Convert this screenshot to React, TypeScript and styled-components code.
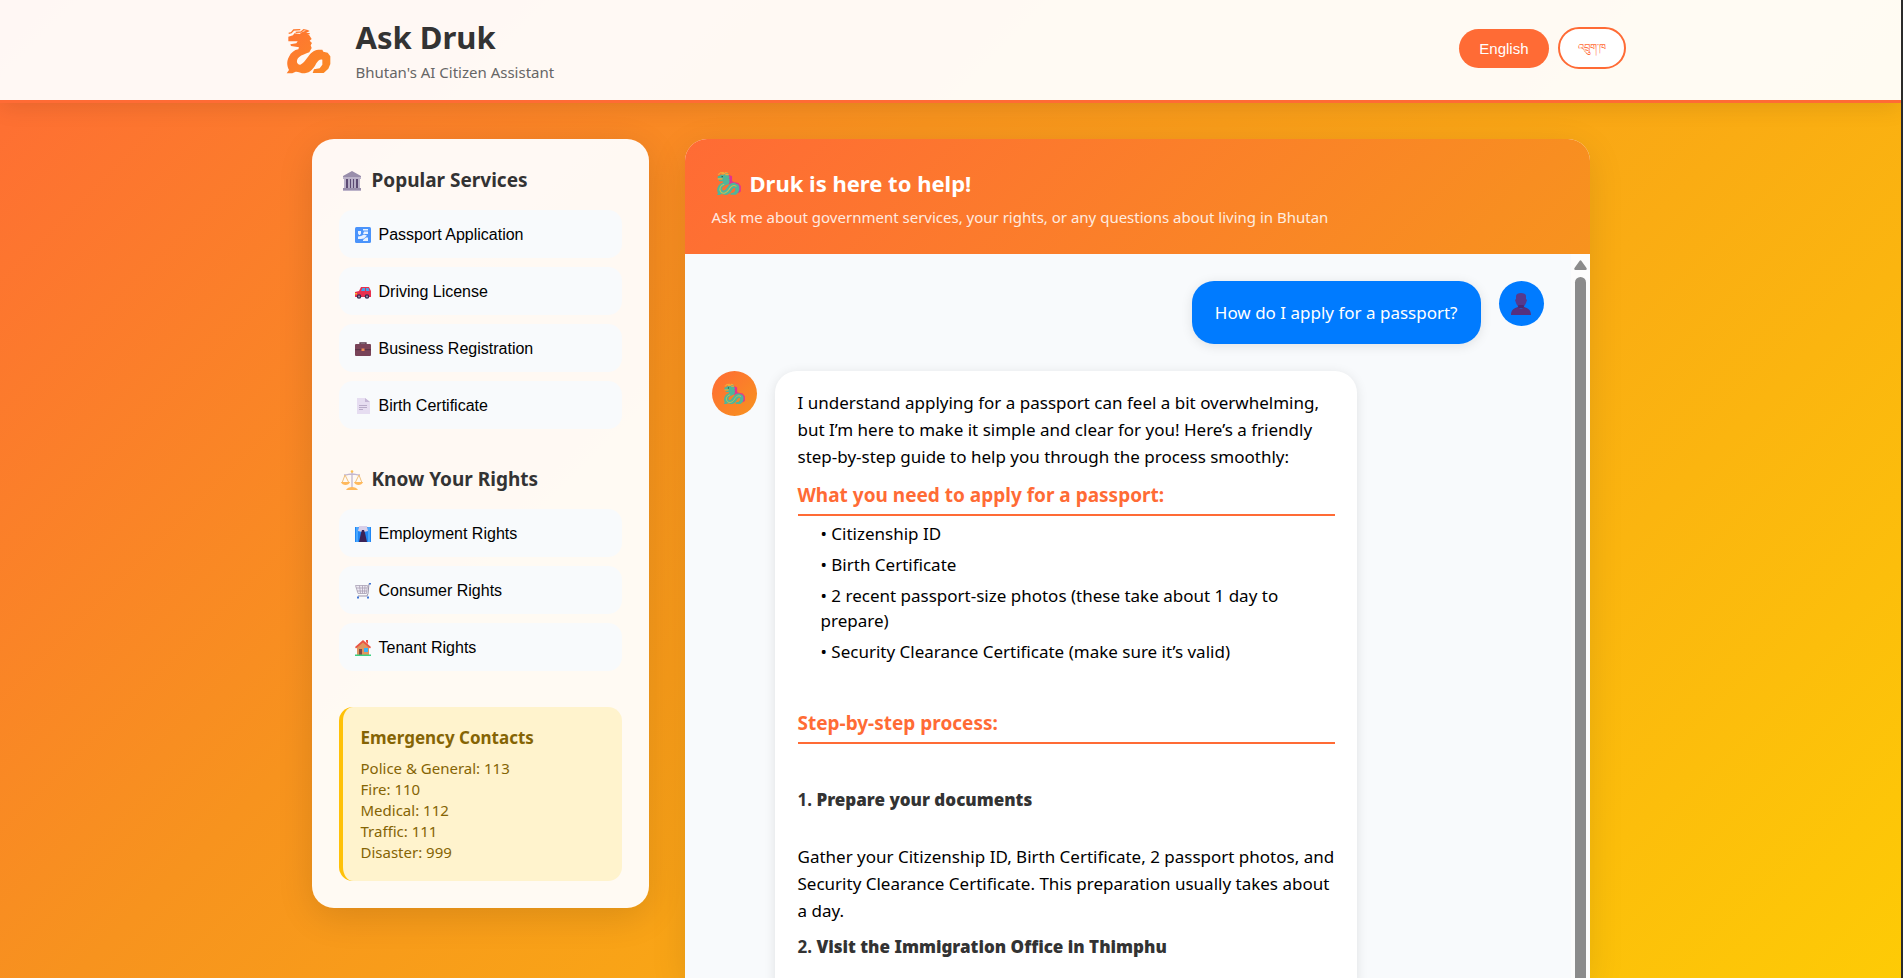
import React from "react";
import styled, { createGlobalStyle } from "styled-components";

const sans = `"Noto Sans", "Open Sans", sans-serif`;
const arial = `"Liberation Sans", Arial, sans-serif`;

const GlobalStyle = createGlobalStyle`
  *, *::before, *::after { box-sizing: border-box; margin: 0; padding: 0; }
  body {
    height: 100vh;
    overflow: hidden;
    font-family: ${sans};
    font-size: 17px;
    color: #000;
  }
`;

const Page = styled.div`
  display: flex;
  flex-direction: column;
  height: 100vh;
  overflow: hidden;
  border-right: 2px solid #2b2b2b;
  background: linear-gradient(135deg, #ff6b35 0%, #f7931e 32%, #ffd700 100%) 0 0 / 100% 1380px;
`;

const Header = styled.header`
  flex: none;
  background: rgba(255, 255, 255, 0.95);
  border-bottom: 3px solid #ff6b35;
  box-shadow: 0 4px 22px rgba(0, 0, 0, 0.1);
`;

const HeaderInner = styled.div`
  display: flex;
  align-items: center;
  justify-content: space-between;
  width: 100%;
  max-width: 1350px;
  height: 100px;
  margin: 0 auto;
`;

const Brand = styled.div`
  display: flex;
  align-items: center;
  gap: 15px;
  padding-left: 5px;
`;

const BrandLogo = styled.svg`
  width: 60px;
  height: 60px;
`;

const BrandName = styled.h1`
  margin-bottom: 2px;
  font-size: 31px;
  line-height: 42px;
  font-weight: 700;
  color: #333;
`;

const Tagline = styled.p`
  font-size: 15px;
  line-height: 24px;
  color: #666;
`;

const Languages = styled.div`
  display: flex;
  align-items: center;
  gap: 9px;
  padding-bottom: 4px;
`;

const LangButton = styled.button<{ $active?: boolean }>`
  height: ${(p) => (p.$active ? 39 : 42)}px;
  padding: ${(p) => (p.$active ? "0 20px" : "4px 18px 0")};
  border: ${(p) => (p.$active ? "none" : "2px solid #ff6b35")};
  border-radius: 22px;
  background: ${(p) => (p.$active ? "#ff6b35" : "#fff")};
  color: ${(p) => (p.$active ? "#fff" : "#ff6b35")};
  font: ${(p) => (p.$active ? 15 : 10)}px ${arial};
  cursor: pointer;
`;

const Main = styled.main`
  display: flex;
  align-items: flex-start;
  gap: 36px;
  width: 100%;
  max-width: 1350px;
  flex: 1;
  min-height: 0;
  margin: 0 auto;
  padding: 36px 36px 0;
`;

const Sidebar = styled.aside`
  flex: 0 0 337px;
  padding: 27px;
  border-radius: 22px;
  background: rgba(255, 255, 255, 0.95);
  box-shadow: 0 9px 36px rgba(0, 0, 0, 0.12);
`;

const Section = styled.section`
  margin-bottom: 36px;
`;

const SectionTitle = styled.h2`
  display: flex;
  align-items: center;
  gap: 7px;
  margin-bottom: 15px;
  font-size: 19px;
  line-height: 29px;
  font-weight: 700;
  color: #333;
`;

const ServiceList = styled.div`
  display: flex;
  flex-direction: column;
  gap: 9px;
`;

const ServiceButton = styled.button`
  display: flex;
  align-items: center;
  gap: 8px;
  width: 100%;
  height: 48px;
  padding: 2px 16px 0;
  border: none;
  border-radius: 14px;
  background: #f8fafc;
  color: #000;
  font: 16px ${arial};
  text-align: left;
  cursor: pointer;
`;

const Icon = styled.svg<{ $size: number }>`
  flex: none;
  display: block;
  width: ${(p) => p.$size}px;
  height: ${(p) => p.$size}px;
`;

const Emergency = styled.section`
  padding: 18px;
  border-left: 4px solid #ffc107;
  border-radius: 14px;
  background: #fff3cd;
  color: #856404;
`;

const EmergencyTitle = styled.h3`
  margin-bottom: 8px;
  font-size: 17px;
  line-height: 25px;
  font-weight: 700;
`;

const EmergencyList = styled.ul`
  list-style: none;
  font-size: 15px;
  line-height: 21px;
`;

const Chat = styled.section`
  display: flex;
  flex-direction: column;
  flex: 1;
  min-width: 0;
  height: 100%;
  overflow: hidden;
  border-radius: 22px 22px 0 0;
  background: rgba(255, 255, 255, 0.95);
  box-shadow: 0 9px 36px rgba(0, 0, 0, 0.1);
`;

const ChatHeader = styled.div`
  flex: none;
  padding: 27px 27px 26px;
  background: linear-gradient(135deg, #ff6b35, #f7931e);
  color: #fff;
`;

const ChatTitle = styled.h2`
  display: flex;
  align-items: center;
  gap: 9px;
  padding-left: 4px;
  margin-bottom: 5px;
  font-size: 22px;
  line-height: 35px;
  font-weight: 700;
`;

const ChatIntro = styled.p`
  font-size: 15px;
  line-height: 22px;
  opacity: 0.85;
`;

const ChatBody = styled.div`
  display: flex;
  flex: 1;
  min-height: 0;
  background: #f8fafc;
`;

const Messages = styled.div`
  flex: 1;
  min-width: 0;
  overflow: hidden;
  padding: 27px;
`;

const ScrollTrack = styled.div`
  display: flex;
  flex-direction: column;
  align-items: center;
  gap: 7px;
  flex: 0 0 19px;
  padding-top: 6px;
  background: #fcfcfc;
`;

const ScrollArrow = styled.svg`
  flex: none;
  width: 13px;
  height: 10px;
`;

const ScrollThumb = styled.div`
  flex: 1;
  width: 11px;
  border-radius: 6px 6px 0 0;
  background: #8b8b8b;
`;

const MessageRow = styled.div<{ $user?: boolean }>`
  display: flex;
  flex-direction: ${(p) => (p.$user ? "row-reverse" : "row")};
  align-items: flex-start;
  gap: 18px;
  margin-bottom: 27px;
`;

const Avatar = styled.div<{ $user?: boolean }>`
  display: flex;
  flex: none;
  align-items: center;
  justify-content: center;
  width: 45px;
  height: 45px;
  border-radius: 50%;
  background: ${(p) => (p.$user ? "#007bff" : "linear-gradient(135deg, #ff6b35, #f7931e)")};
`;

const Bubble = styled.div<{ $user?: boolean }>`
  max-width: 70%;
  padding: ${(p) => (p.$user ? "18px 23px" : "18px 22px 40px 23px")};
  border-radius: 22px;
  background: ${(p) => (p.$user ? "#007bff" : "#fff")};
  color: ${(p) => (p.$user ? "#fff" : "#000")};
  line-height: 27px;
  box-shadow: 0 2px 12px rgba(0, 0, 0, 0.1);
`;

const AnswerHeading = styled.h3<{ $spaced?: boolean }>`
  margin-top: ${(p) => (p.$spaced ? 45 : 11)}px;
  padding-bottom: 4px;
  border-bottom: 2px solid #ff6b35;
  font-size: 19px;
  line-height: 29px;
  font-weight: 700;
  color: #ff6b35;
`;

const Needs = styled.ul`
  display: flex;
  flex-direction: column;
  gap: 6px;
  margin-top: 5px;
  padding-left: 23px;
  list-style: none;
  line-height: 25px;
`;

const StepTitle = styled.h4<{ $first?: boolean }>`
  margin: ${(p) => (p.$first ? "42px 0 30px" : "9px 0 0")};
  font-size: 17px;
  line-height: 27px;
  font-weight: 700;
  color: #333;
  strong { font-weight: 900; }
`;

const silhouette =
  "M22 50L36 46 40 40 56 42 64 36 80 30 86 33 74 40 84 44 92 57 86 62 93 69 89 76 92 84 85 97" +
  "C74 102 62 104 54 112C44 120 47 135 58 134C66 132 72 122 80 112C88 100 98 90 112 89L124 89 127 95 140 98 148 109" +
  "V132L142 146 128 159H95L99 148 116 145 124 134V119C116 117 112 122 106 130C98 146 88 158 72 160" +
  "C60 161 52 154 44 155L34 160H17L24 150C18 138 16 124 24 110C30 98 40 90 52 88L54 82 30 78 28 73 46 70 50 64 22 64Z";

const fur = "M23 40L31 38 38 30 58 29M44 37L60 36 68 29 80 32M66 41L86 41";

const Dragon = ({ size }: { size: number }) => (
  <Icon $size={size} viewBox="12 20 146 146" aria-hidden="true">
    <path fill="#e2338f" d="M84 40L106 50V80L116 84 142 90 157 108V140L140 150 144 112 122 98 84 98Z" />
    <path fill="#4fb59a" d={silhouette} />
    <path fill="none" stroke="#f5a83a" strokeWidth="7" d={fur} />
    <path
      fill="none"
      stroke="#c9c050"
      strokeWidth="6"
      d="M60 98C36 104 28 124 40 142C54 158 76 148 88 128C98 110 112 98 132 110M22 66H50"
    />
    <circle cx="48" cy="53" r="4" fill="#26413c" />
  </Icon>
);

const Landmark = () => (
  <Icon $size={26} viewBox="0 0 26 26" aria-hidden="true">
    <path fill="#998eab" d="M4 8L13 3l9 5v3H4zM4 20h18v3H4z" />
    <path fill="#bcb3c9" d="M4 9h18v2H4zM5 11h2v9H5zM19 11h2v9h-2zM4 22h18v1H4z" />
    <path fill="#5c4a73" d="M7 11h12v9H7z" />
    <path fill="#b7aec6" d="M9 11h2v9H9zM12 11h2v9h-2zM15 11h2v9h-2z" />
  </Icon>
);

const Scales = () => (
  <Icon $size={26} viewBox="0 0 26 26" aria-hidden="true">
    <path fill="none" stroke="#c3b7cf" strokeWidth="1.3" d="M13 4v18M5 8c4 0 5-1 8-1s4 1 8 1" />
    <path fill="none" stroke="#efc07c" strokeWidth="1" d="M6 8l-3 8M6 8l4 8M20 8l-4 8M20 8l3 8" />
    <path fill="#ffb95c" d="M2 15h9c-1 4-8 4-9 0zM15 15h9c-1 4-8 4-9 0zM7 23c2-4 10-4 12 0z" />
    <circle cx="13" cy="4.500" r="1.300" fill="#fcc04f" />
  </Icon>
);

const Customs = () => (
  <Icon $size={16} viewBox="0 0 16 16" aria-hidden="true">
    <rect width="16" height="16" rx="1.500" fill="#4a93fb" />
    <path fill="#e8f1ff" d="M3 4h3v2.500L5 8H4L3 6.500zM8 2h5v1.500H8zM9 4.500h4V7H8zM3 9.500l3-.5 3-1.500 3 1-3 3-3 .5H3zM8 13l3-2.500h2V14H8z" />
  </Icon>
);

const Car = () => (
  <Icon $size={16} viewBox="0 0 16 16" aria-hidden="true">
    <path fill="#e8304f" d="M0 8l4-1 2-4h8l2 4v6H0z" />
    <path fill="#44a4ee" d="M6 7l1.500-3H10v3zM11 4h2.500l1 3H11z" />
    <path fill="#ffb02e" d="M0 9h2v1.500H0z" />
    <circle cx="4" cy="12.500" r="2.300" fill="#3b2b4f" />
    <circle cx="12" cy="12.500" r="2.300" fill="#3b2b4f" />
    <circle cx="4" cy="12.500" r="1" fill="#9b8fb5" />
    <circle cx="12" cy="12.500" r="1" fill="#9b8fb5" />
  </Icon>
);

const Briefcase = () => (
  <Icon $size={16} viewBox="0 0 16 16" aria-hidden="true">
    <path fill="none" stroke="#58384a" strokeWidth="1.300" d="M5 4V2h6v2" />
    <rect y="3" width="16" height="12" rx="1" fill="#794358" />
    <path fill="#5b3548" d="M0 8h16v1.200H0z" />
    <rect x="6.500" y="7.500" width="3" height="2.500" fill="#f08a52" />
  </Icon>
);

const Paper = () => (
  <Icon $size={16} viewBox="0 0 16 16" aria-hidden="true">
    <path fill="#e6ddf1" d="M2 0h8l5 4v12H2z" />
    <path fill="#c5b6d6" d="M10 0l5 4h-5z" />
    <path stroke="#b9abc9" d="M4 7.500h8M4 9.500h8M4 11.500h4" />
  </Icon>
);

const Necktie = () => (
  <Icon $size={16} viewBox="0 0 16 16" aria-hidden="true">
    <path fill="#1f86f5" d="M0 1h16v15H0z" />
    <path fill="#48a7ff" d="M1 1h2v15H1zM13 1h2v15h-2z" />
    <path fill="#d9cfe8" d="M4 0h8l1 5-4 1H7L3 5z" />
    <path fill="#3c2357" d="M7 4h2l1 3 2 9H4l2-9z" />
  </Icon>
);

const Cart = () => (
  <Icon $size={16} viewBox="0 0 16 16" aria-hidden="true">
    <path fill="#eeeaf3" stroke="#a8a0b4" strokeWidth=".8" d="M.500 2.500h12l-1 8H3zM1 5h11M2 8h10M4.500 2.500l1 8M7.500 2.500v8M10 2.500l-.5 8" />
    <path fill="none" stroke="#9b93a8" strokeWidth="1" d="M16 .600h-2l-1 10-1 2.400H3" />
    <path fill="#4176d6" d="M14 0h2v1.500h-2zM2 13.500h2v2H2zM12 13.500h2v2h-2z" />
  </Icon>
);

const House = () => (
  <Icon $size={16} viewBox="0 0 16 16" aria-hidden="true">
    <path fill="#e0955f" d="M2 7l6-6 6 6v8H2z" />
    <path fill="#ea5343" d="M8 0l8 7-1 1.500L8 2.500 1 8.500 0 7zM11 0h2v4l-2-2z" />
    <path fill="#804a44" d="M4 9h3v6H4z" />
    <path fill="#38b2f6" d="M9 8h4v4H9z" />
    <path fill="#3dd081" d="M0 14.500h16V16H0z" />
  </Icon>
);

const Person = () => (
  <Icon $size={22} viewBox="0 0 22 22" aria-hidden="true">
    <path fill="#553a8e" d="M6 3c0-4 10-4 10 0v3l1 1-1 3c-1 3-3 4-5 4s-4-1-5-4L5 7l1-1z" />
    <path fill="#4b2a73" d="M8.500 12h5l1 3h-7z" />
    <path fill="#55307f" d="M1 22c0-5 3-7 7-8 2 2 4 2 6 0 4 1 7 3 7 8z" />
  </Icon>
);

const services = [
  { label: "Passport Application", icon: <Customs /> },
  { label: "Driving License", icon: <Car /> },
  { label: "Business Registration", icon: <Briefcase /> },
  { label: "Birth Certificate", icon: <Paper /> },
];

const rights = [
  { label: "Employment Rights", icon: <Necktie /> },
  { label: "Consumer Rights", icon: <Cart /> },
  { label: "Tenant Rights", icon: <House /> },
];

const contacts = ["Police & General: 113", "Fire: 110", "Medical: 112", "Traffic: 111", "Disaster: 999"];

const needs = [
  "Citizenship ID",
  "Birth Certificate",
  "2 recent passport-size photos (these take about 1 day to prepare)",
  "Security Clearance Certificate (make sure it’s valid)",
];

const Services = ({ items }: { items: typeof services }) => (
  <ServiceList>
    {items.map((item) => (
      <ServiceButton key={item.label} type="button">
        {item.icon}
        {item.label}
      </ServiceButton>
    ))}
  </ServiceList>
);

export default function App() {
  return (
    <>
      <GlobalStyle />
      <Page>
        <Header>
          <HeaderInner>
            <Brand>
              <BrandLogo viewBox="0 0 180 180" aria-hidden="true">
                <defs>
                  <linearGradient id="druk" x1="0" y1="0" x2="1" y2="1">
                    <stop offset="0" stopColor="#ff7433" />
                    <stop offset="1" stopColor="#fb8a24" />
                  </linearGradient>
                </defs>
                <path fill="url(#druk)" d={silhouette} />
                <path fill="none" stroke="#ff7a2f" strokeWidth="4" d={fur} />
              </BrandLogo>
              <div>
                <BrandName>Ask Druk</BrandName>
                <Tagline>Bhutan's AI Citizen Assistant</Tagline>
              </div>
            </Brand>
            <Languages>
              <LangButton type="button" $active>English</LangButton>
              <LangButton type="button">འབྲུག་ཁ</LangButton>
            </Languages>
          </HeaderInner>
        </Header>
        <Main>
          <Sidebar>
            <Section>
              <SectionTitle><Landmark />Popular Services</SectionTitle>
              <Services items={services} />
            </Section>
            <Section>
              <SectionTitle><Scales />Know Your Rights</SectionTitle>
              <Services items={rights} />
            </Section>
            <Emergency>
              <EmergencyTitle>Emergency Contacts</EmergencyTitle>
              <EmergencyList>
                {contacts.map((c) => <li key={c}>{c}</li>)}
              </EmergencyList>
            </Emergency>
          </Sidebar>
          <Chat>
            <ChatHeader>
              <ChatTitle><Dragon size={25} />Druk is here to help!</ChatTitle>
              <ChatIntro>Ask me about government services, your rights, or any questions about living in Bhutan</ChatIntro>
            </ChatHeader>
            <ChatBody>
              <Messages>
                <MessageRow $user>
                  <Avatar $user><Person /></Avatar>
                  <Bubble $user>How do I apply for a passport?</Bubble>
                </MessageRow>
                <MessageRow>
                  <Avatar><Dragon size={22} /></Avatar>
                  <Bubble>
                    <p>
                      I understand applying for a passport can feel a bit overwhelming, but I’m here to make it
                      simple and clear for you! Here’s a friendly step-by-step guide to help you through the
                      process smoothly:
                    </p>
                    <AnswerHeading>What you need to apply for a passport:</AnswerHeading>
                    <Needs>
                      {needs.map((n) => <li key={n}>{`• ${n}`}</li>)}
                    </Needs>
                    <AnswerHeading $spaced>Step-by-step process:</AnswerHeading>
                    <StepTitle $first>1. <strong>Prepare your documents</strong></StepTitle>
                    <p>
                      Gather your Citizenship ID, Birth Certificate, 2 passport photos, and Security Clearance
                      Certificate. This preparation usually takes about a day.
                    </p>
                    <StepTitle>2. <strong>Visit the Immigration Office in Thimphu</strong></StepTitle>
                  </Bubble>
                </MessageRow>
              </Messages>
              <ScrollTrack aria-hidden="true">
                <ScrollArrow viewBox="0 0 13 10">
                  <path fill="#8b8b8b" d="M5.500 1Q6.500-.500 7.500 1L12.500 8q.8 2-1 2h-10q-1.800 0-1-2z" />
                </ScrollArrow>
                <ScrollThumb />
              </ScrollTrack>
            </ChatBody>
          </Chat>
        </Main>
      </Page>
    </>
  );
}
